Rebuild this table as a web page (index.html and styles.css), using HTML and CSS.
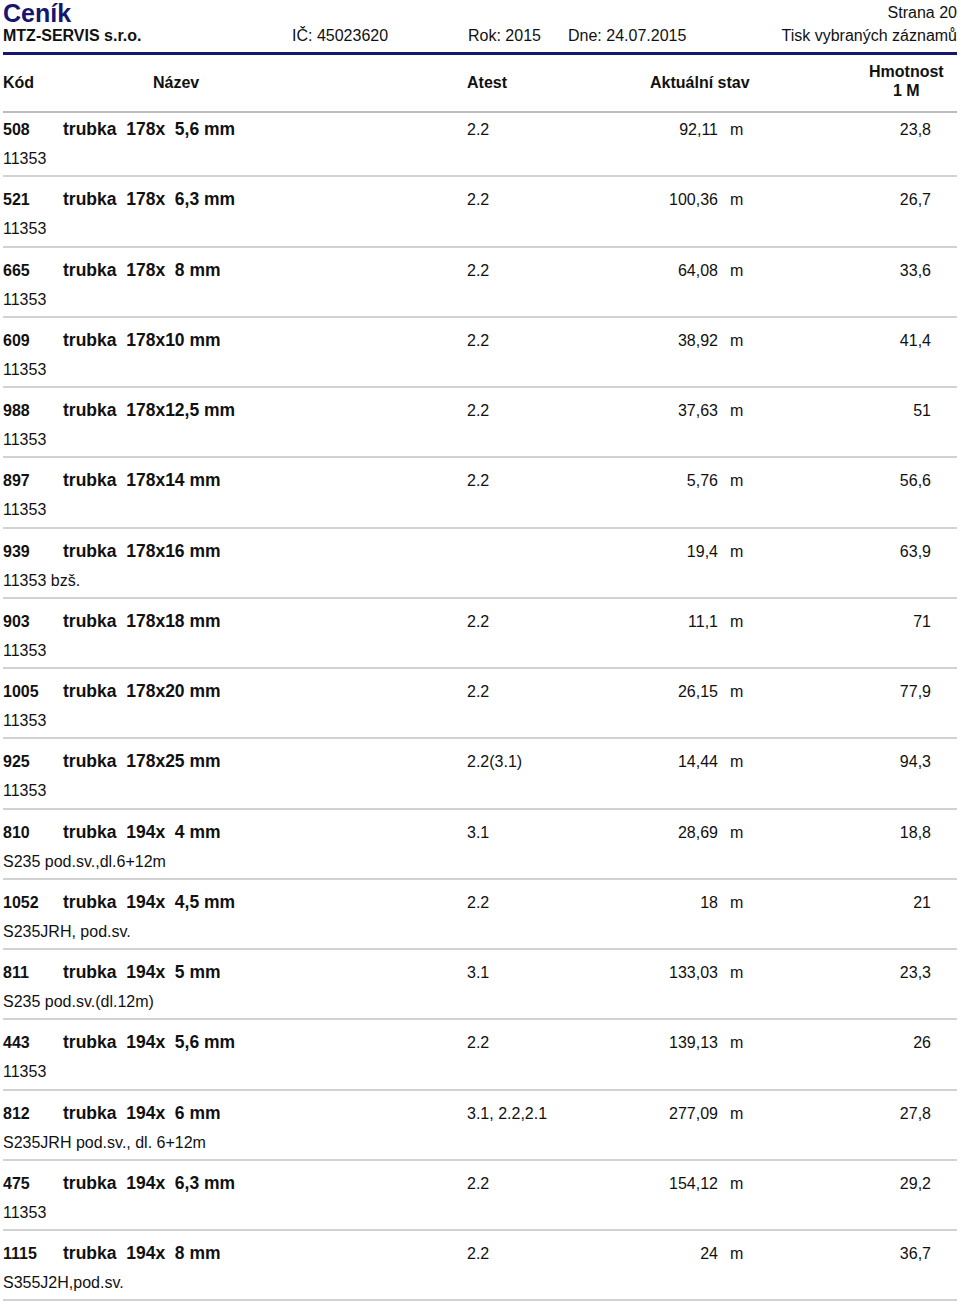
FILE: index.html
```html
<!DOCTYPE html>
<html lang="cs">
<head>
<meta charset="utf-8">
<title>Ceník</title>
<link rel="stylesheet" href="styles.css">
</head>
<body>
<div class="page">
  <header class="top">
    <div class="title-row">
      <h1 class="title">Ceník</h1>
      <span class="page-no">Strana 20</span>
    </div>
    <div class="info-row">
      <span class="company">MTZ-SERVIS s.r.o.</span>
      <span>IČ: 45023620</span>
      <span>Rok: 2015</span>
      <span>Dne: 24.07.2015</span>
      <span class="print">Tisk vybraných záznamů</span>
    </div>
  </header>

  <div class="thead">
    <div class="h-code">Kód</div>
    <div class="h-name">Název</div>
    <div class="h-atest">Atest</div>
    <div class="h-stav">Aktuální stav</div>
    <div class="h-weight"><span>Hmotnost<br>1 M</span></div>
  </div>

  <div class="tbody">
    <div class="row"><div class="line"><span class="code">508</span><span class="name">trubka  178x  5,6 mm</span><span class="atest">2.2</span><span class="val">92,11</span><span class="unit">m</span><span class="weight">23,8</span></div><div class="note">11353</div></div>
    <div class="row"><div class="line"><span class="code">521</span><span class="name">trubka  178x  6,3 mm</span><span class="atest">2.2</span><span class="val">100,36</span><span class="unit">m</span><span class="weight">26,7</span></div><div class="note">11353</div></div>
    <div class="row"><div class="line"><span class="code">665</span><span class="name">trubka  178x  8 mm</span><span class="atest">2.2</span><span class="val">64,08</span><span class="unit">m</span><span class="weight">33,6</span></div><div class="note">11353</div></div>
    <div class="row"><div class="line"><span class="code">609</span><span class="name">trubka  178x10 mm</span><span class="atest">2.2</span><span class="val">38,92</span><span class="unit">m</span><span class="weight">41,4</span></div><div class="note">11353</div></div>
    <div class="row"><div class="line"><span class="code">988</span><span class="name">trubka  178x12,5 mm</span><span class="atest">2.2</span><span class="val">37,63</span><span class="unit">m</span><span class="weight">51</span></div><div class="note">11353</div></div>
    <div class="row"><div class="line"><span class="code">897</span><span class="name">trubka  178x14 mm</span><span class="atest">2.2</span><span class="val">5,76</span><span class="unit">m</span><span class="weight">56,6</span></div><div class="note">11353</div></div>
    <div class="row"><div class="line"><span class="code">939</span><span class="name">trubka  178x16 mm</span><span class="atest"></span><span class="val">19,4</span><span class="unit">m</span><span class="weight">63,9</span></div><div class="note">11353 bzš.</div></div>
    <div class="row"><div class="line"><span class="code">903</span><span class="name">trubka  178x18 mm</span><span class="atest">2.2</span><span class="val">11,1</span><span class="unit">m</span><span class="weight">71</span></div><div class="note">11353</div></div>
    <div class="row"><div class="line"><span class="code">1005</span><span class="name">trubka  178x20 mm</span><span class="atest">2.2</span><span class="val">26,15</span><span class="unit">m</span><span class="weight">77,9</span></div><div class="note">11353</div></div>
    <div class="row"><div class="line"><span class="code">925</span><span class="name">trubka  178x25 mm</span><span class="atest">2.2(3.1)</span><span class="val">14,44</span><span class="unit">m</span><span class="weight">94,3</span></div><div class="note">11353</div></div>
    <div class="row"><div class="line"><span class="code">810</span><span class="name">trubka  194x  4 mm</span><span class="atest">3.1</span><span class="val">28,69</span><span class="unit">m</span><span class="weight">18,8</span></div><div class="note">S235 pod.sv.,dl.6+12m</div></div>
    <div class="row"><div class="line"><span class="code">1052</span><span class="name">trubka  194x  4,5 mm</span><span class="atest">2.2</span><span class="val">18</span><span class="unit">m</span><span class="weight">21</span></div><div class="note">S235JRH, pod.sv.</div></div>
    <div class="row"><div class="line"><span class="code">811</span><span class="name">trubka  194x  5 mm</span><span class="atest">3.1</span><span class="val">133,03</span><span class="unit">m</span><span class="weight">23,3</span></div><div class="note">S235 pod.sv.(dl.12m)</div></div>
    <div class="row"><div class="line"><span class="code">443</span><span class="name">trubka  194x  5,6 mm</span><span class="atest">2.2</span><span class="val">139,13</span><span class="unit">m</span><span class="weight">26</span></div><div class="note">11353</div></div>
    <div class="row"><div class="line"><span class="code">812</span><span class="name">trubka  194x  6 mm</span><span class="atest">3.1, 2.2,2.1</span><span class="val">277,09</span><span class="unit">m</span><span class="weight">27,8</span></div><div class="note">S235JRH pod.sv., dl. 6+12m</div></div>
    <div class="row"><div class="line"><span class="code">475</span><span class="name">trubka  194x  6,3 mm</span><span class="atest">2.2</span><span class="val">154,12</span><span class="unit">m</span><span class="weight">29,2</span></div><div class="note">11353</div></div>
    <div class="row"><div class="line"><span class="code">1115</span><span class="name">trubka  194x  8 mm</span><span class="atest">2.2</span><span class="val">24</span><span class="unit">m</span><span class="weight">36,7</span></div><div class="note">S355J2H,pod.sv.</div></div>
  </div>
</div>
</body>
</html>
```
FILE: styles.css
```css
* { box-sizing: border-box; }
html, body { margin: 0; padding: 0; background: #fff; }
body {
  font-family: "Liberation Sans", Arial, Helvetica, sans-serif;
  font-size: 16px;
  color: #111;
}
.page { width: 960px; padding: 0 3px; }

.top { border-bottom: 3px solid #161670; padding-bottom: 6px; }
.title-row {
  display: flex;
  justify-content: space-between;
  align-items: flex-start;
  height: 26px;
}
.title {
  margin: 0;
  font-size: 25px;
  line-height: 26px;
  font-weight: bold;
  color: #161670;
}
.page-no { line-height: 25px; }
.info-row {
  display: grid;
  grid-template-columns: 289px 176px 100px 1fr auto;
  line-height: 20px;
}
.company { font-weight: bold; }
.print { text-align: right; }

.thead {
  display: grid;
  grid-template-columns: 60px 404px 130px 121px 52px 161px 1fr;
  height: 58px;
  align-items: center;
  font-weight: bold;
  border-bottom: 2px solid #bdbdbd;
}
.h-name { padding-left: 90px; }
.h-stav { grid-column: 4 / 6; padding-left: 53px; white-space: nowrap; }
.h-weight { grid-column: 6 / 8; padding-left: 99px; margin-bottom: 4px; }
.h-weight span { display: inline-block; text-align: center; line-height: 19px; }

.row {
  padding: 12px 0 6.25px;
  border-bottom: 2px solid #d2d2d2;
}
.row:first-child { padding-top: 6px; }
.line {
  display: grid;
  grid-template-columns: 60px 404px 130px 121px 52px 161px 1fr;
  align-items: baseline;
  height: 20px;
  line-height: 20px;
}
.code { font-weight: bold; }
.name { font-weight: bold; font-size: 17.5px; white-space: pre; }
.val { text-align: right; }
.unit { padding-left: 12px; }
.weight { text-align: right; }
.note { margin-top: 10px; height: 20px; line-height: 20px; }
```
